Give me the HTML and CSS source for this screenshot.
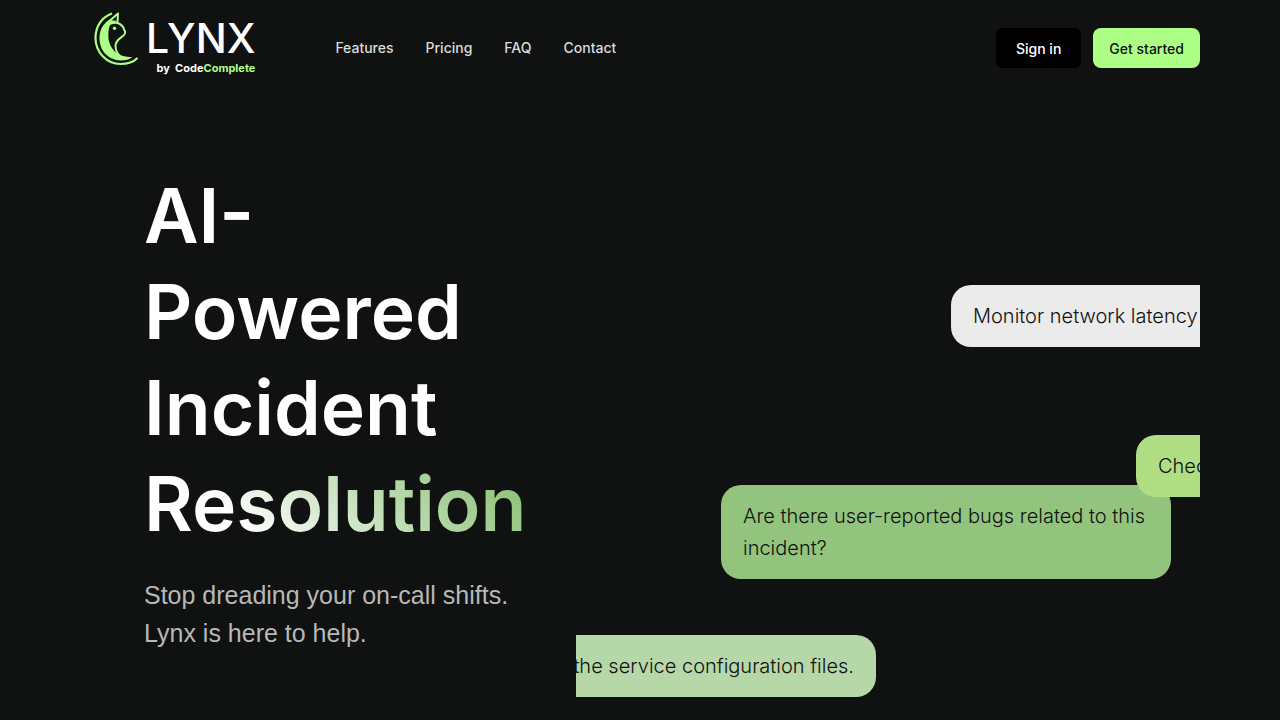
FILE: index.html
```
<!DOCTYPE html>
<html lang="en">
<head>
    <meta charset="UTF-8">
    <meta name="viewport" content="width=device-width, initial-scale=1.0">
    <title>Lynx by CodeComplete</title>
    <link rel="stylesheet" href="styles.css">
</head>
<body>
    <div class="container">
        <header class="header">
            <a href="#" class="logo" aria-label="Lynx by CodeComplete">
                <svg class="logo-icon" width="48" height="56" viewBox="0 0 48 56" fill="none">
                    <path d="M18 2.500C8 6 1.500 15 1.500 27c0 14 11 26 25 26 7 0 13-2 17-6" stroke="#adff86" stroke-width="2.200"/>
                    <path d="M15 9C9 13 5.500 19 5.500 27c0 13 9 22 21 22.500 5 0 9-1 12-3.500-5 0-9-.5-12-2-7-3-11-9-12-16-.5-6 0-11 2-15l7-3z" fill="#adff86"/>
                    <path d="M12 13 24 2.500l-.5 9.500c4 1.500 6 3.500 6.500 6.500 1 1 1.500 2.500 1 4-1.500 4-9 5-9.500 12 0 5 2 9 6 12" stroke="#adff86" stroke-width="2" stroke-linejoin="round"/>
                    <path d="M14 14c3-2 6-3 10-2" stroke="#adff86" stroke-width="2"/>
                    <circle cx="20.500" cy="17.300" r="1.700" fill="#adff86"/>
                </svg>
                <span class="logo-text">
                    <span class="logo-name">LYNX</span>
                    <span class="logo-by">by&nbsp; Code<span class="logo-accent">Complete</span></span>
                </span>
            </a>
            <nav class="nav">
                <a href="#features">Features</a>
                <a href="#pricing">Pricing</a>
                <a href="#faq">FAQ</a>
                <a href="#contact">Contact</a>
            </nav>
            <div class="actions">
                <button type="button" class="button button-dark">Sign in</button>
                <button type="button" class="button button-green">Get started</button>
            </div>
        </header>
        <main class="hero">
            <div class="hero-text">
                <h1>AI-<br>Powered<br>Incident<br><span class="gradient">Resolution</span></h1>
                <p>Stop dreading your on-call shifts.<br>Lynx is here to help.</p>
            </div>
            <div class="stage">
                <div class="bubble bubble-monitor">Monitor network latency</div>
                <div class="bubble bubble-bugs">Are there user-reported bugs related to this incident?</div>
                <div class="bubble bubble-check">Check</div>
                <div class="bubble bubble-config">the service configuration files.</div>
            </div>
        </main>
    </div>
</body>
</html>
```
FILE: styles.css
```
* {
    box-sizing: border-box;
}

body {
    margin: 0;
    background: #101211;
    color: #fff;
    font-family: 'Inter', 'Liberation Sans', sans-serif;
}

a {
    color: inherit;
    text-decoration: none;
}

.container {
    min-height: 100vh;
    padding: 0 80px;
    display: flex;
    flex-direction: column;
}

.header {
    height: 96px;
    display: flex;
    align-items: center;
}

.logo {
    display: flex;
    align-self: flex-start;
    padding: 11px 0 0 14px;
    gap: 4px;
}

.logo-icon {
    flex: none;
}

.logo-text {
    display: flex;
    flex-direction: column;
    align-items: flex-end;
    padding-top: 4px;
}

.logo-name {
    font-size: 41px;
    line-height: 46px;
    font-weight: 500;
}

.logo-by {
    font-size: 11px;
    line-height: 14px;
    font-weight: 700;
    white-space: nowrap;
}

.logo-accent {
    color: #adff86;
}

.nav {
    display: flex;
    gap: 32px;
    margin-left: 80px;
    font-size: 14px;
    line-height: 24px;
    font-weight: 500;
    color: #d9dbda;
}

.actions {
    display: flex;
    gap: 12px;
    margin-left: auto;
}

.button {
    height: 40px;
    border: none;
    border-radius: 8px;
    padding: 0 16px;
    font-family: inherit;
    font-size: 14px;
    font-weight: 500;
    cursor: pointer;
}

.button-dark {
    background: #000;
    color: #fff;
    border-radius: 6px;
    padding: 0 20px;
}

.button-green {
    background: #adff86;
    color: #101211;
}

.hero {
    flex: 1;
    display: grid;
    grid-template-columns: 432px 1fr;
    padding-left: 64px;
}

.hero-text {
    padding-top: 72px;
}

h1 {
    margin: 0;
    font-size: 75px;
    line-height: 96px;
    font-weight: 600;
}

.gradient {
    display: inline-block;
    background: linear-gradient(45deg, #fff 25%, #d9ead3 45%, #b6d7a8 65%, #93c47d 90%);
    -webkit-background-clip: text;
    background-clip: text;
    color: transparent;
}

.hero-text p {
    margin: 24px 0 0;
    font-family: 'Liberation Sans', Arial, sans-serif;
    font-size: 25px;
    line-height: 38px;
    color: #b7b8b8;
}

.stage {
    position: relative;
    overflow: hidden;
}

.bubble {
    position: absolute;
    padding: 15px 22px;
    border-radius: 20px;
    font-size: 20px;
    line-height: 32px;
    font-weight: 300;
    color: #101211;
    white-space: nowrap;
}

.bubble-monitor {
    top: 189px;
    left: 375px;
    background: #ebebeb;
}

.bubble-bugs {
    top: 389px;
    left: 145px;
    width: 450px;
    background: #93c47d;
    white-space: normal;
}

.bubble-check {
    top: 339px;
    left: 560px;
    background: #b0df83;
}

.bubble-config {
    top: 539px;
    right: 324px;
    background: #b6d7a8;
}
```
